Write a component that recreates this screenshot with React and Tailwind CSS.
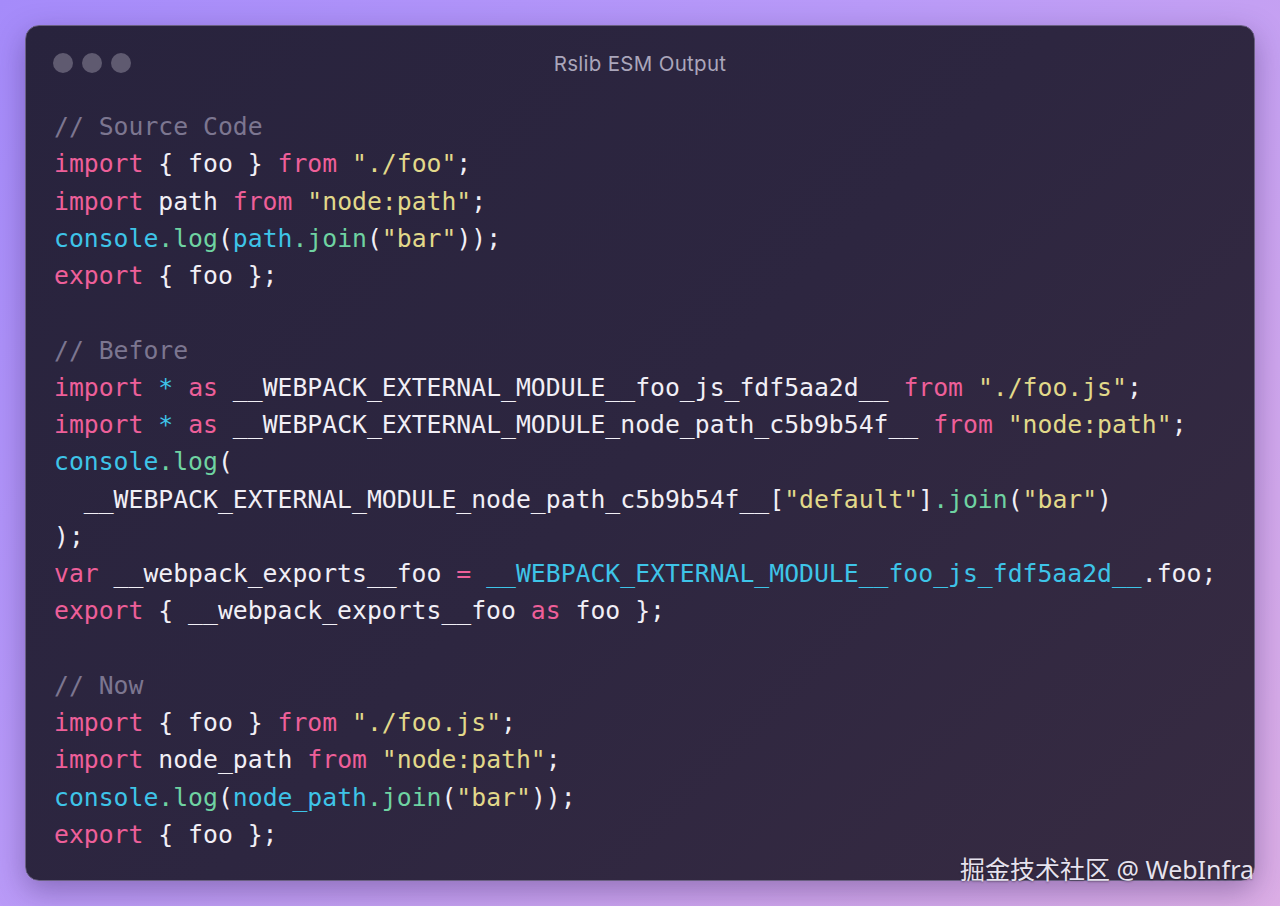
import React from "react";

const K = "text-[#ee5f99]"; // keyword pink
const S = "text-[#e2d98a]"; // string yellow
const C = "text-[#3ec4e8]"; // cyan
const G = "text-[#6fd3a2]"; // green
const M = "text-[#7c7690]"; // comment
const W = "text-[#f1eff6]"; // default

const lines = [
  [[M, "// Source Code"]],
  [[K, "import"], [W, " { foo } "], [K, "from"], [W, " "], [S, "\"./foo\""], [W, ";"]],
  [[K, "import"], [W, " path "], [K, "from"], [W, " "], [S, "\"node:path\""], [W, ";"]],
  [[C, "console"], [G, ".log"], [W, "("], [C, "path"], [G, ".join"], [W, "("], [S, "\"bar\""], [W, "));"]],
  [[K, "export"], [W, " { foo };"]],
  [],
  [[M, "// Before"]],
  [[K, "import"], [W, " "], [C, "*"], [W, " "], [K, "as"], [W, " __WEBPACK_EXTERNAL_MODULE__foo_js_fdf5aa2d__ "], [K, "from"], [W, " "], [S, "\"./foo.js\""], [W, ";"]],
  [[K, "import"], [W, " "], [C, "*"], [W, " "], [K, "as"], [W, " __WEBPACK_EXTERNAL_MODULE_node_path_c5b9b54f__ "], [K, "from"], [W, " "], [S, "\"node:path\""], [W, ";"]],
  [[C, "console"], [G, ".log"], [W, "("]],
  [[W, "  __WEBPACK_EXTERNAL_MODULE_node_path_c5b9b54f__["], [S, "\"default\""], [W, "]"], [G, ".join"], [W, "("], [S, "\"bar\""], [W, ")"]],
  [[W, ");"]],
  [[K, "var"], [W, " __webpack_exports__foo "], [K, "="], [W, " "], [C, "__WEBPACK_EXTERNAL_MODULE__foo_js_fdf5aa2d__"], [W, ".foo;"]],
  [[K, "export"], [W, " { __webpack_exports__foo "], [K, "as"], [W, " foo };"]],
  [],
  [[M, "// Now"]],
  [[K, "import"], [W, " { foo } "], [K, "from"], [W, " "], [S, "\"./foo.js\""], [W, ";"]],
  [[K, "import"], [W, " node_path "], [K, "from"], [W, " "], [S, "\"node:path\""], [W, ";"]],
  [[C, "console"], [G, ".log"], [W, "("], [C, "node_path"], [G, ".join"], [W, "("], [S, "\"bar\""], [W, "));"]],
  [[K, "export"], [W, " { foo };"]],
];

export default function App() {
  return (
    <div className="relative w-[1280px] h-[906px] overflow-hidden bg-[linear-gradient(135deg,#a58bfa_0%,#b99af8_40%,#cfa6ee_75%,#dcaee6_100%)] pt-[25px] pl-[25px]">
      <div className="relative w-[1230px] h-[856px] rounded-[14px] border border-[#6a6082] bg-[linear-gradient(135deg,#28233d_0%,#2d2640_50%,#372b42_100%)] shadow-[0_10px_30px_rgba(40,20,80,0.35)]">
        <div className="grid grid-cols-[1fr_auto_1fr] items-center pt-[27px] pl-[27px] pr-[27px]">
          <div className="flex gap-[9px]">
            <div className="w-[20px] h-[20px] rounded-full bg-[#5f5a70]" />
            <div className="w-[20px] h-[20px] rounded-full bg-[#5f5a70]" />
            <div className="w-[20px] h-[20px] rounded-full bg-[#5f5a70]" />
          </div>
          <div className="text-[20.5px] leading-[20px] tracking-[0.3px] text-[#aaa6bb] font-['Inter','Liberation_Sans',sans-serif] translate-y-[1px]">
            Rslib ESM Output
          </div>
          <div />
        </div>
        <div className="pl-[28px] mt-[35px] font-['DejaVu_Sans_Mono','Liberation_Mono',monospace] text-[24.75px] leading-[37.26px] whitespace-pre">
          {lines.map((toks, i) => (
            <div key={i} className="h-[37.26px]">
              {toks.map(([cls, t], j) => (
                <span key={j} className={cls}>{t}</span>
              ))}
            </div>
          ))}
        </div>
      </div>
      <div className="absolute right-[26px] bottom-[22px] text-[25px] leading-[30px] text-[#e6e2ee] font-['Noto_Sans','Noto_Sans_CJK_SC',sans-serif] [text-shadow:0_1px_2px_rgba(0,0,0,0.35)]">
        掘金技术社区 @ WebInfra
      </div>
    </div>
  );
}
